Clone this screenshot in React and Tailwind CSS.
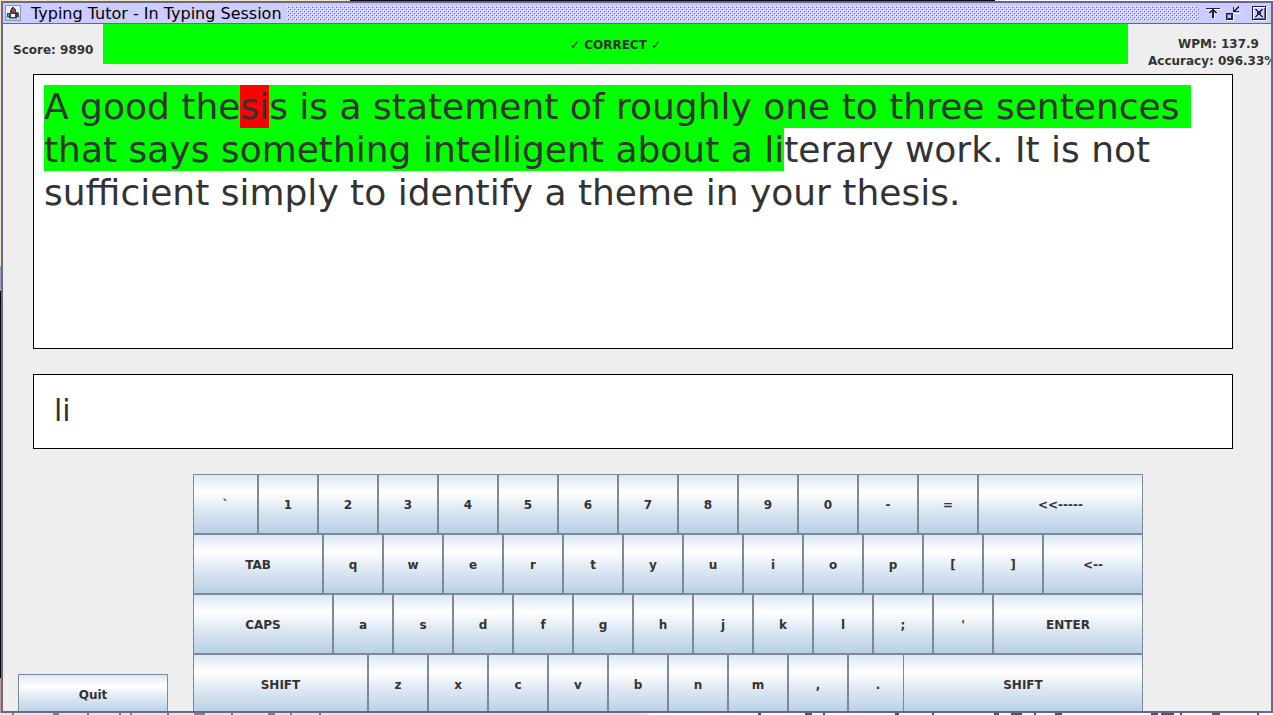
import React, { useState } from "react";

const KEY =
  "h-[60px] shrink-0 border border-[#7a8a99] bg-[linear-gradient(to_bottom,#dde8f3_0%,#ffffff_30%,#dde8f3_60%,#b8cfe5_100%)] pt-[2px] text-center text-xs font-bold text-[#333333]";

const ROWS = [
  [
    ["`", "w-[65px]"],
    ..."1234567890-=".split("").map((k) => [k, "w-[60px]"]),
    ["<<-----", "w-[165px]"],
  ],
  [
    ["TAB", "w-[130px]"],
    ..."qwertyuiop[]".split("").map((k) => [k, "w-[60px]"]),
    ["<--", "w-[100px]"],
  ],
  [
    ["CAPS", "w-[140px]"],
    ..."asdfghjkl;'".split("").map((k) => [k, "w-[60px]"]),
    ["ENTER", "w-[150px]"],
  ],
  [
    ["SHIFT", "w-[175px]"],
    ..."zxcvbnm,.".split("").map((k) => [k, "w-[60px]"]),
    ["SHIFT", "w-[240px] -ml-[5px]"],
  ],
];

function JavaIcon() {
  return (
    <svg width="16" height="16" viewBox="0 0 16 16" shapeRendering="crispEdges" aria-hidden="true">
      <rect x="0" y="0" width="16" height="16" rx="1" fill="#7f9bb4" />
      <rect x="1" y="1" width="14" height="14" fill="#e9f0f5" />
      <rect x="1" y="11" width="14" height="4" fill="#bccddb" />
      <path d="M7 2h2v1h1v1h1v3h2v1h1v4h-2v1H4v-1H2V8h3V5h1V3h1z" fill="#39434d" />
      <path d="M6 9h4v3H6z" fill="#f4f7f9" />
      <path d="M3 9h1v2H3z" fill="#8a97a2" />
      <path d="M7 4h3v3H7z" fill="#d8392b" />
      <path d="M7 4h1v1H7z" fill="#39434d" />
      <path d="M4 13h8v1H4z" fill="#8796a3" />
    </svg>
  );
}

function Bumps() {
  return (
    <svg className="h-[15px] min-w-0 flex-1" shapeRendering="crispEdges" aria-hidden="true">
      <defs>
        <pattern id="bumps" width="4" height="4" patternUnits="userSpaceOnUse">
          <path d="M0 0h1v1H0zM2 2h1v1H2z" fill="#ffffff" />
          <path d="M1 1h1v1H1zM3 3h1v1H3z" fill="#666699" />
        </pattern>
      </defs>
      <rect width="100%" height="100%" fill="url(#bumps)" />
    </svg>
  );
}

function IconifyGlyph() {
  return (
    <svg width="15" height="14" viewBox="0 0 15 14" shapeRendering="crispEdges" aria-hidden="true">
      <path d="M1 3h14v1H1zM8 8h1v5H8zM9 6h2v1H9z" fill="#ffffff" />
      <path d="M0 2h14v1H0zM6 3h2v9H6zM5 4h4v1H5zM4 5h2v1H4zM8 5h2v1H8zM3 6h2v1H3zM9 6h2v1H9z" fill="#1e1e38" />
    </svg>
  );
}

function RestoreGlyph() {
  return (
    <svg width="15" height="15" viewBox="0 0 15 15" shapeRendering="crispEdges" aria-hidden="true">
      <path d="M1 14h7v1H1zM7 8h1v7H7zM8 7h7v1H8z" fill="#ffffff" />
      <path d="M0 7h7v7H0zM2 9v3h3V9z" fillRule="evenodd" fill="#1e1e38" />
      <path d="M1 8h5v1H1zM1 8h1v5H1z" fill="#666699" />
      <path d="M7 1h1v5H7zM7 5h6v1H7zM8 4h2v1H8zM9 3h2v1H9zM10 2h2v1h-2zM11 1h2v1h-2zM12 0h1v1h-1z" fill="#1e1e38" />
    </svg>
  );
}

function CloseGlyph() {
  return (
    <svg width="15" height="15" viewBox="0 0 15 15" shapeRendering="crispEdges" aria-hidden="true">
      <path d="M1 14h14v1H1zM14 1h1v14h-1z" fill="#ffffff" />
      <path d="M0 0h14v14H0zM1 1v12h12V1z" fillRule="evenodd" fill="#1e1e38" />
      <path d="M1 1h12v1H1zM1 1h1v12H1z" fill="#ffffff" />
      <path d="M12 2h1v11h-1zM2 12h11v1H2z" fill="#666699" />
      <path
        d="M3 3h2v1H3zM4 4h2v1H4zM5 5h4v1H5zM5 6h4v2H5zM5 8h4v1H5zM4 9h2v1H4zM3 10h2v1H3zM9 3h2v1H9zM8 4h2v1H8zM8 9h2v1H8zM9 10h2v1H9z"
        fill="#26264a"
      />
    </svg>
  );
}

function TitleBar() {
  return (
    <header className="flex h-[21px] shrink-0 items-center border-b border-[#666699] bg-[#ccccff] pl-[2px] pr-1">
      <JavaIcon />
      <h1 className="ml-[10px] mr-[5px] whitespace-nowrap pt-[2px] text-base leading-[18px] text-black">
        Typing Tutor - In Typing Session
      </h1>
      <Bumps />
      <div className="ml-[7px] flex items-center">
        <button type="button" aria-label="Minimize" className="mr-[5px]">
          <IconifyGlyph />
        </button>
        <button type="button" aria-label="Restore" className="mr-[11px]">
          <RestoreGlyph />
        </button>
        <button type="button" aria-label="Close">
          <CloseGlyph />
        </button>
      </div>
    </header>
  );
}

function StatusBar() {
  return (
    <div className="flex shrink-0 text-xs font-bold leading-[17px]">
      <div className="flex h-[50px] w-[100px] shrink-0 items-center whitespace-nowrap pl-[10px] pt-[2px]">
        Score: 9890
      </div>
      <div className="flex h-10 flex-1 items-center justify-center bg-[#00ff00] pt-[2px]">✓ CORRECT ✓</div>
      <div className="w-[143px] shrink-0 overflow-hidden whitespace-nowrap pl-5 pt-3">
        <div className="pl-[30px]">WPM: 137.9</div>
        <div>Accuracy: 096.33%</div>
      </div>
    </div>
  );
}

function Passage() {
  return (
    <p className="ml-[30px] mr-[38px] h-[275px] shrink-0 whitespace-pre-wrap border border-black bg-white p-[10px] text-4xl leading-[43px]">
      <span className="bg-[#00ff00] py-px">A good the</span>
      <span className="bg-[#ff0000] py-px">si</span>
      <span className="bg-[#00ff00] py-px">
        {"s is a statement of roughly one to three sentences that says something intelligent about a li"}
      </span>
      {"terary work. It is not sufficient simply to identify a theme in your thesis."}
    </p>
  );
}

function Keyboard() {
  return (
    <div className="flex flex-col">
      {ROWS.map((row, r) => (
        <div key={r} className="flex">
          {row.map(([label, width], i) => (
            <button key={i} type="button" className={`${KEY} ${width}`}>
              {label}
            </button>
          ))}
        </div>
      ))}
    </div>
  );
}

export default function App() {
  const [typed, setTyped] = useState("li");
  return (
    <div className="flex h-screen flex-col overflow-hidden bg-[linear-gradient(to_right,#f3e6bb_0_648px,#ffffff_648px)] font-['DejaVu_Sans','Noto_Sans',sans-serif] text-[#333333]">
      <div className="flex h-px shrink-0">
        <div className="w-[350px] bg-[#f3e6bb]" />
        <div className="w-[645px] bg-black" />
        <div className="flex-1 bg-white" />
      </div>
      <div className="flex min-h-0 flex-1">
        <div className="w-px shrink-0 bg-[linear-gradient(to_bottom,#f3e6bb_0_265px,#a0a0a8_265px_290px,#000000_290px_677px,#c0a080_677px)]" />
        <main className="flex min-w-0 flex-1 flex-col overflow-hidden border-2 border-[#666699] bg-[#eeeeee]">
          <TitleBar />
          <StatusBar />
          <Passage />
          <input
            type="text"
            aria-label="Typed text"
            value={typed}
            onChange={(e) => setTyped(e.target.value)}
            className="ml-[30px] mr-[38px] mt-[25px] h-[75px] shrink-0 border border-black bg-white px-5 pb-[2px] text-[30px] outline-none"
          />
          <div className="mt-[25px] flex min-h-0 flex-1 overflow-hidden">
            <div className="w-[190px] shrink-0 pl-[15px] pt-[200px]">
              <button
                type="button"
                className="h-10 w-[150px] border border-[#7a8a99] bg-[linear-gradient(to_bottom,#dde8f3_0%,#ffffff_30%,#dde8f3_60%,#b8cfe5_100%)] pt-[2px] text-xs font-bold"
              >
                Quit
              </button>
            </div>
            <Keyboard />
          </div>
        </main>
      </div>
      <svg className="h-[2px] w-full shrink-0" shapeRendering="crispEdges" aria-hidden="true">
        <path
          d="M12 1H14M53 1H59M87 1H89M119 1H121M130 1H132M167 1H169M194 1H205M231 1H233M268 1H275M290 1H292M319 1H321"
          stroke="#8d8468"
          strokeWidth="2"
        />
        <path
          d="M758 1H761M805 1H812M823 1H825M895 1H899M932 1H934M994 1H999M1011 1H1022M1034 1H1036M1055 1H1062M1151 1H1158M1161 1H1174M1180 1H1182M1212 1H1220M1257 1H1259"
          stroke="#55555a"
          strokeWidth="2"
        />
      </svg>
    </div>
  );
}
